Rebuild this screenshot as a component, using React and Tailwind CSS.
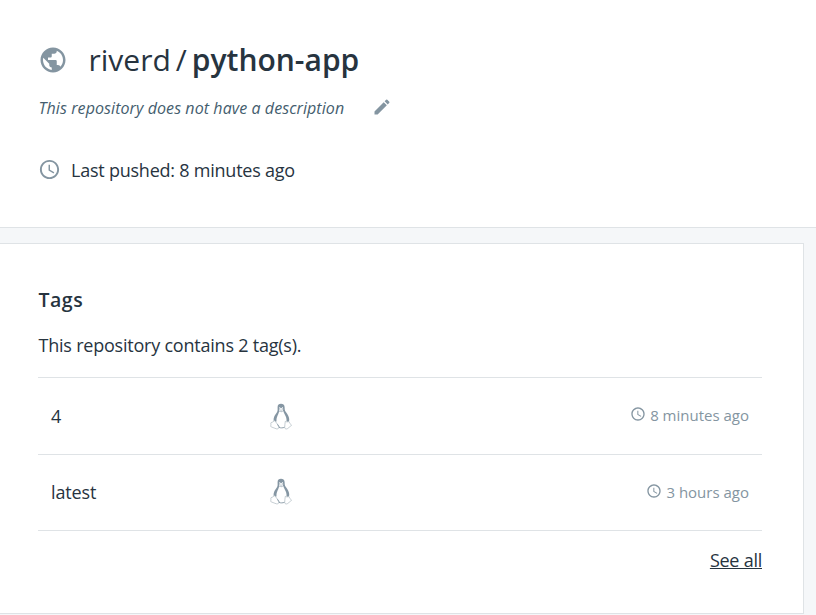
import { MdPublic, MdEdit, MdAccessTime } from "react-icons/md";

function Penguin() {
  return (
    <svg viewBox="0 0 22 27" className="h-[27px] w-[22px]" fill="none">
      <path
        d="M7.600 3.900C7.600 1.600 9 .7 11 .7s3.500 1 3.600 3.200c.1 2.200 0 3.400 1.300 5.200 1.800 2.600 3.100 4.500 3.300 7 .1 1.500-.2 2.500-.8 3.300l-1.900-1.200c.3-2.300-.5-4.600-1.600-6.400-.9-1.600-1.200-2.700-1.700-3.700L11.200 9.200 9.200 8.200c-.3 1.500-.9 2.600-1.600 4.400-.8 2-1.300 3.600-1.100 5.900L3.900 19c-.8-2.200-.1-4.700 1-6.700 1.200-2.100 2.600-3.300 2.700-5.100z"
        fill="#8596a3"
      />
      <path d="M9 5.800l2-1 2.200 1-.2 1.900-2 1-1.900-1z" fill="#f4f6f7" />
      <path d="M9.200 4.600h1M12 4.600h1" stroke="#e5eaed" strokeWidth="1" />
      <path d="M9 6.400l2 1 2.200-1" stroke="#a9b5bd" strokeWidth=".6" />
      <path
        d="M4.800 17.700l2.700 3.600 1.400 2.300c.3 1.700-1 2.600-2.600 2.200L2 24.200c-1.500-.4-1.500-.9-1.100-2.100.2-.9-.4-2 .2-2.500.7-.5 1.800-.3 2.300-1 .3-.4.700-.9 1.400-.9zM15.300 18.300c1 .7 2.400.8 3.500 0l.8 1.900 1.700 1.600c.4.6-.2 1.100-.9 1.500l-2.700 2.200c-1.300.9-2.600.6-3-.8-.2-1.700.5-4.600.6-6.400z"
        fill="#fff"
        stroke="#aeb9c0"
        strokeWidth=".7"
      />
      <path d="M7.500 21.300l1.400 2.300.1.800c1.800.7 3.600.6 5.500-.1" stroke="#8596a3" strokeWidth=".9" />
    </svg>
  );
}

function TagRow({ name, pushed, className, pushedClassName }) {
  return (
    <div className={"flex items-center border-b border-[#dfe3e6] px-[13px] " + className}>
      <span className="w-[219px] text-[18px] leading-6 tracking-[-0.15px]">{name}</span>
      <Penguin />
      <div className={"ml-auto flex items-center text-[15px] leading-6 text-[#8495a1] " + pushedClassName}>
        <MdAccessTime className="mr-[4.500px] mb-[2px] size-[16px]" />
        <span>{pushed}</span>
      </div>
    </div>
  );
}

export default function App() {
  return (
    <div className="flex h-[615px] w-[816px] flex-col overflow-hidden bg-[#f5f7f9] font-['Open_Sans',sans-serif] text-[#27343f]">
      <header className="h-[228px] border-b border-[#dfe3e6] bg-white pl-[38px]">
        <div className="flex items-center pt-[40px]">
          <MdPublic className="size-[30px] text-[#8495a1]" />
          <h1 className="ml-[20.500px] flex text-[30px] leading-10 whitespace-nowrap">
            <span>riverd</span>
            <span className="mx-[5px]">/</span>
            <span className="font-semibold">python-app</span>
          </h1>
        </div>
        <div className="mt-[16px] flex items-center">
          <p className="ml-[0.500px] text-[16px] leading-6 tracking-[0.08px] text-[#445d6e] italic">
            This repository does not have a description
          </p>
          <MdEdit className="mb-[2px] ml-[27.500px] size-[20px] text-[#8495a1]" />
        </div>
        <div className="mt-[38px] flex items-center">
          <MdAccessTime className="mb-px size-[23px] text-[#8495a1]" />
          <span className="ml-[10px] text-[18px] leading-6 tracking-[-0.23px]">Last pushed: 8 minutes ago</span>
        </div>
      </header>
      <main className="mt-[15px] h-[371px] w-[804px] border-t border-r border-b border-[#dfe3e6] bg-white pr-[41px] pl-[38px]">
        <h2 className="pt-[42px] pl-[0.500px] text-[19.500px] leading-7 font-semibold tracking-[0.5px]">Tags</h2>
        <p className="mt-[19px] h-[45px] border-b border-[#dfe3e6] pl-[0.500px] text-[18px] leading-6 tracking-[-0.22px]">
          This repository contains 2 tag(s).
        </p>
        <TagRow name="4" pushed="8 minutes ago" className="h-[77px]" pushedClassName="pb-[2px]" />
        <TagRow name="latest" pushed="3 hours ago" className="h-[76px] pb-[2px]" pushedClassName="" />
        <div className="mt-[17px] flex justify-end">
          <a className="text-[18px] leading-6 tracking-[-0.25px] underline">See all</a>
        </div>
      </main>
    </div>
  );
}
